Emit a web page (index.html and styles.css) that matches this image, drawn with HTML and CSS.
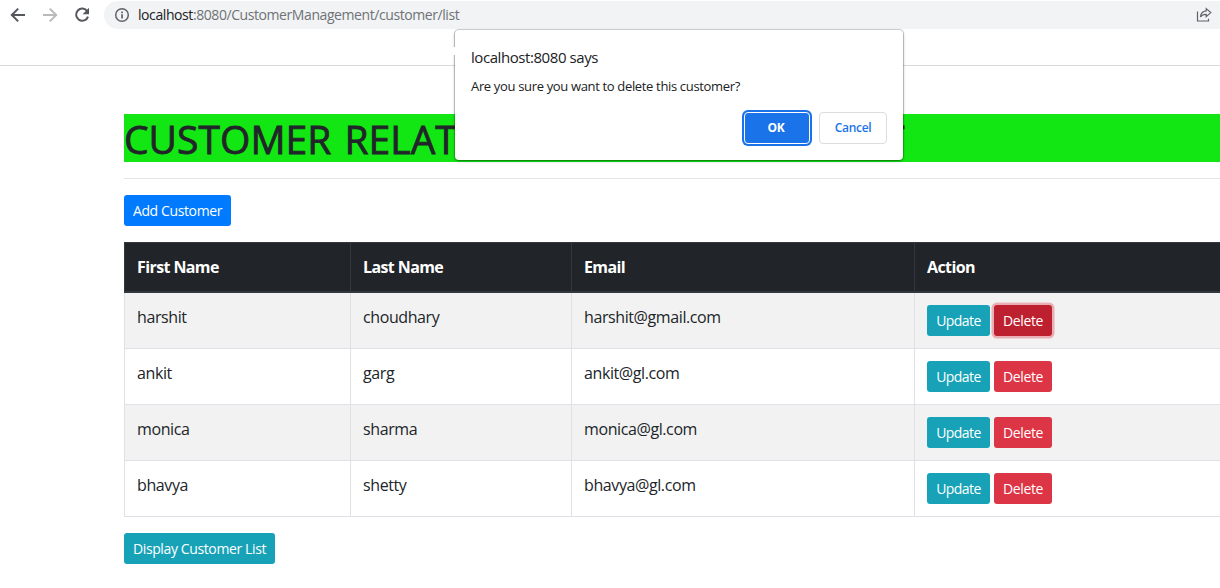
FILE: index.html
```html
<!DOCTYPE html>
<html lang="en">
<head>
<meta charset="utf-8">
<title>Customer Management</title>
<link rel="stylesheet" href="styles.css">
</head>
<body>
<header class="browser-bar">
  <nav class="nav-icons">
    <svg class="icon" viewBox="0 0 16 16"><path d="M15 8H2.2M8.2 1.6L1.8 8l6.4 6.4" fill="none" stroke="#54575c" stroke-width="2"/></svg>
    <svg class="icon" viewBox="0 0 16 16"><path d="M1 8h12.800M7.800 1.600L14.200 8l-6.400 6.400" fill="none" stroke="#b9babc" stroke-width="2"/></svg>
    <svg class="icon" viewBox="0 0 16 16"><path d="M13.300 4.300A6.100 6.100 0 1 0 14 9.600" fill="none" stroke="#54575c" stroke-width="2"/><path d="M15 .8v6.400H8.600z" fill="#54575c"/></svg>
  </nav>
  <div class="address">
    <svg class="info" viewBox="0 0 16 16"><circle cx="8" cy="8" r="6.300" fill="none" stroke="#5f6368" stroke-width="1.500"/><path d="M7.200 7.200h1.700v4.200H7.200zM7.200 4.500h1.700v1.700H7.200z" fill="#5f6368"/></svg>
    <span class="url"><span class="host">localhost</span>:8080/CustomerManagement/customer/list</span>
    <svg class="share" viewBox="0 0 16 16"><path d="M1.500 4.500v9.500h11v-2.200" fill="none" stroke="#5f6368" stroke-width="1.200"/><path d="M10.200 1.600l4.600 4-4.600 4V7.300C7.500 7.200 5.700 8 4.500 10c.2-3.500 2.200-5.700 5.700-6.100z" fill="none" stroke="#5f6368" stroke-width="1.200"/></svg>
  </div>
</header>

<main class="container">
  <h1 class="title">CUSTOMER RELAT<span class="title-rest">IONSHIP MANAGEMENT</span></h1>
  <hr class="rule">
  <button class="btn btn-primary btn-add">Add Customer</button>
  <table class="table">
    <colgroup><col class="c-first"><col class="c-last"><col class="c-email"><col class="c-action"></colgroup>
    <thead>
      <tr><th>First Name</th><th>Last Name</th><th>Email</th><th>Action</th></tr>
    </thead>
    <tbody>
      <tr><td>harshit</td><td>choudhary</td><td>harshit@gmail.com</td><td><div class="actions"><button class="btn btn-info btn-update">Update</button><button class="btn btn-danger btn-delete active">Delete</button></div></td></tr>
      <tr><td>ankit</td><td>garg</td><td>ankit@gl.com</td><td><div class="actions"><button class="btn btn-info btn-update">Update</button><button class="btn btn-danger btn-delete">Delete</button></div></td></tr>
      <tr><td>monica</td><td>sharma</td><td>monica@gl.com</td><td><div class="actions"><button class="btn btn-info btn-update">Update</button><button class="btn btn-danger btn-delete">Delete</button></div></td></tr>
      <tr><td>bhavya</td><td>shetty</td><td>bhavya@gl.com</td><td><div class="actions"><button class="btn btn-info btn-update">Update</button><button class="btn btn-danger btn-delete">Delete</button></div></td></tr>
    </tbody>
  </table>
  <button class="btn btn-info btn-list">Display Customer List</button>
</main>

<div class="dialog" role="dialog">
  <div class="dialog-title">localhost:8080 says</div>
  <div class="dialog-text">Are you sure you want to delete this customer?</div>
  <div class="dialog-actions">
    <button class="dlg-btn ok">OK</button>
    <button class="dlg-btn cancel">Cancel</button>
  </div>
</div>
</body>
</html>
```
FILE: styles.css
```css
* { box-sizing: border-box; }
html { overflow: hidden; }
body {
  margin: 0;
  width: 1220px;
  height: 588px;
  overflow: hidden;
  position: relative;
  background: #fff;
  color: #212529;
  font: 16px/24px "Open Sans", "Noto Sans", sans-serif;
}
.browser-bar {
  display: flex;
  align-items: flex-start;
  height: 66px;
  padding-top: 1px;
  border-bottom: 1px solid #dadadc;
}
.nav-icons {
  display: flex;
  gap: 16px;
  width: 104px;
  padding: 6px 0 0 10px;
}
.icon { width: 16px; height: 16px; flex: none; }
.address {
  flex: 1;
  display: flex;
  align-items: center;
  height: 28px;
  padding: 0 8px 0 10px;
  border-radius: 14px 0 0 14px;
  background: #f1f3f4;
}
.info { width: 16px; height: 16px; margin-right: 8px; }
.url { font-size: 14px; letter-spacing: -0.42px; color: #6f7276; }
.host { color: #202124; }
.share { width: 16px; height: 16px; margin-left: auto; }

.container { width: 1140px; padding-top: 48px; margin-left: 124px; }
.title {
  margin: 0;
  height: 48px;
  background: #13e713;
  font-size: 39px;
  line-height: 50px;
  font-weight: 400;
  letter-spacing: 0.05px;
  word-spacing: 2.800px;
  -webkit-text-stroke: 0.8px #212529;
  white-space: nowrap;
}
.title-rest { letter-spacing: 0.65px; word-spacing: 0; }
.rule { margin: 16px 0; border: 0; border-top: 1px solid #e5e5e5; }
.btn {
  display: block;
  height: 31px;
  padding: 0;
  border: 0;
  border-radius: 3px;
  color: #fff;
  font: 14px/31px "Open Sans", "Noto Sans", sans-serif;
  letter-spacing: -0.38px;
  text-align: center;
  white-space: nowrap;
}
.btn-primary { background: #007bff; }
.btn-info { background: #17a2b8; }
.btn-danger { background: #dc3545; }
.btn-add { width: 107px; margin-bottom: 16px; }
.btn-list { width: 151px; }
.btn-update { width: 63px; letter-spacing: -0.55px; }
.btn-delete { width: 58px; }
.btn-delete.active { background: #bd2130; box-shadow: 0 0 0 2.500px rgba(220, 53, 69, .35); }
.actions { display: flex; gap: 4px; }

.table {
  width: 1140px;
  margin-bottom: 16px;
  table-layout: fixed;
  border-collapse: collapse;
}
.c-first { width: 226px; }
.c-last { width: 221px; }
.c-email { width: 343px; }
.table th, .table td {
  padding: 12px;
  border: 1px solid #dee2e6;
  text-align: left;
  vertical-align: top;
  letter-spacing: -0.4px;
}
.table th {
  border-color: #32383e;
  border-bottom-width: 2px;
  background: #212529;
  color: #fff;
  font-weight: 700;
  letter-spacing: -0.6px;
}
.table tbody tr:nth-child(odd) { background: #f2f2f2; }

.dialog {
  position: absolute;
  left: 455px;
  top: 30px;
  width: 448px;
  height: 130px;
  padding: 16px 16px 16px;
  border-radius: 4px;
  background: #fff;
  box-shadow: 0 0 0 1px rgba(0, 0, 0, .16), 0 1px 3px rgba(0, 0, 0, .4);
}
.dialog::before {
  content: "";
  position: absolute;
  left: -4px;
  top: 17px;
  width: 5px;
  height: 8px;
  background: #fff;
}
.dialog-title { font-size: 15px; line-height: 22px; letter-spacing: -0.43px; color: #202124; }
.dialog-text { margin-top: 8px; font-size: 13px; line-height: 20px; letter-spacing: -0.34px; color: #202124; }
.dialog-actions {
  display: flex;
  justify-content: flex-end;
  gap: 9px;
  margin-top: 16px;
}
.dlg-btn {
  height: 32px;
  padding: 0;
  border-radius: 4px;
  font: 600 12px/30px "Open Sans", "Noto Sans", sans-serif;
  letter-spacing: -0.3px;
}
.ok {
  width: 66px;
  padding-right: 2px;
  border: 1px solid #fff;
  background: #1a73e8;
  color: #fff;
  font-weight: 700;
  box-shadow: 0 0 0 2px #1a73e8;
}
.cancel { width: 68px; border: 1px solid #dadce0; background: #fff; color: #1a73e8; }
```
